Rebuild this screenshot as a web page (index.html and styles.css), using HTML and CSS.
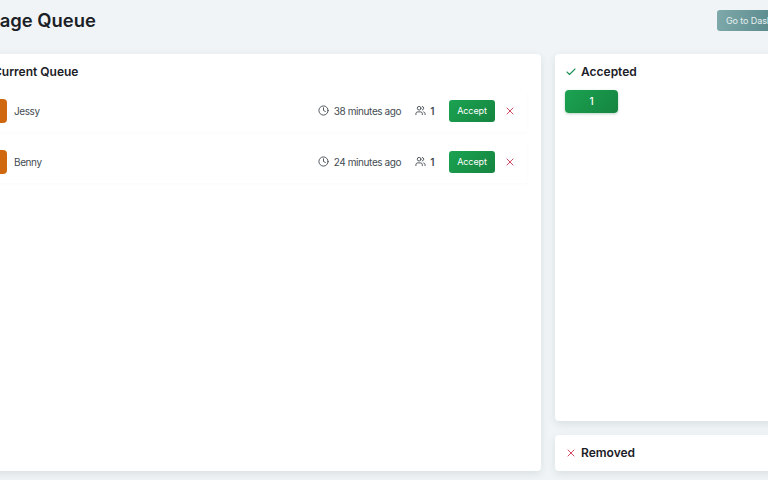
FILE: index.html
```html
<!DOCTYPE html>
<html lang="en">
<head>
    <meta charset="UTF-8">
    <meta name="viewport" content="width=device-width, initial-scale=1.0">
    <title>Manage Queue</title>
    <link rel="stylesheet" href="styles.css">
</head>
<body>
    <div class="page">
        <header class="top-bar">
            <h1>Manage Queue</h1>
            <a class="dash-btn">Go to Dashboard</a>
        </header>

        <div class="columns">
            <section class="card queue-card">
                <h2>Current Queue</h2>
                <div class="queue-row">
                    <div class="avatar"></div>
                    <div class="name">Jessy</div>
                    <div class="meta">
                        <svg class="icon" viewBox="0 0 24 24"><circle cx="12" cy="12" r="10"/><path d="M12 6v6l4 2"/></svg>
                        <span>38 minutes ago</span>
                    </div>
                    <div class="party">
                        <svg class="icon" viewBox="0 0 24 24"><path d="M16 21v-2a4 4 0 0 0-4-4H6a4 4 0 0 0-4 4v2"/><circle cx="9" cy="7" r="4"/><path d="M22 21v-2a4 4 0 0 0-3-3.87"/><path d="M16 3.13a4 4 0 0 1 0 7.75"/></svg>
                        <span>1</span>
                    </div>
                    <button class="accept-btn">Accept</button>
                    <svg class="icon remove" viewBox="0 0 24 24"><path d="M18 6 6 18"/><path d="m6 6 12 12"/></svg>
                </div>
                <div class="queue-row">
                    <div class="avatar"></div>
                    <div class="name">Benny</div>
                    <div class="meta">
                        <svg class="icon" viewBox="0 0 24 24"><circle cx="12" cy="12" r="10"/><path d="M12 6v6l4 2"/></svg>
                        <span>24 minutes ago</span>
                    </div>
                    <div class="party">
                        <svg class="icon" viewBox="0 0 24 24"><path d="M16 21v-2a4 4 0 0 0-4-4H6a4 4 0 0 0-4 4v2"/><circle cx="9" cy="7" r="4"/><path d="M22 21v-2a4 4 0 0 0-3-3.87"/><path d="M16 3.13a4 4 0 0 1 0 7.75"/></svg>
                        <span>1</span>
                    </div>
                    <button class="accept-btn">Accept</button>
                    <svg class="icon remove" viewBox="0 0 24 24"><path d="M18 6 6 18"/><path d="m6 6 12 12"/></svg>
                </div>
            </section>

            <div class="side">
                <section class="card accepted-card">
                    <h2 class="side-title">
                        <svg class="icon check" viewBox="0 0 24 24"><path d="M20 6 9 17l-5-5"/></svg>
                        Accepted
                    </h2>
                    <div class="ticket">1</div>
                </section>
                <section class="card removed-card">
                    <h2 class="side-title">
                        <svg class="icon remove" viewBox="0 0 24 24"><path d="M18 6 6 18"/><path d="m6 6 12 12"/></svg>
                        Removed
                    </h2>
                </section>
            </div>
        </div>
    </div>
</body>
</html>
```

FILE: styles.css
```css
html, body {
    margin: 0;
    height: 100%;
    overflow: hidden;
}
body {
    font-family: Inter, "Noto Sans", sans-serif;
    color: #1a2026;
    background: #f0f4f6;
}
.page {
    width: 879px;
    margin-left: -39px;
    padding-top: 9px;
}
.top-bar {
    display: flex;
    justify-content: space-between;
    align-items: center;
    height: 22px;
    margin-bottom: 23px;
}
h1 {
    margin: 0;
    font-size: 18.4px;
    font-weight: 600;
}
.dash-btn {
    width: 123px;
    height: 21px;
    padding-left: 9px;
    line-height: 21px;
    box-sizing: border-box;
    font-size: 9px;
    letter-spacing: -0.1px;
    color: #e6f0f0;
    background: linear-gradient(100deg, #7fa9aa, #2f666b);
    border-radius: 3px;
}
.columns {
    display: flex;
    gap: 14px;
    padding-left: 9px;
}
.card {
    background: #fff;
    border-radius: 4px;
    box-shadow: 0 3px 9px rgba(30, 50, 60, 0.1);
    box-sizing: border-box;
}
.queue-card {
    width: 571px;
    height: 417px;
    padding: 10px 14px;
}
h2 {
    margin: 0;
    font-size: 12px;
    font-weight: 600;
    line-height: 15px;
}
.queue-card h2 {
    margin-bottom: 10px;
    padding-left: 9px;
}
.queue-row {
    display: flex;
    align-items: center;
    height: 43px;
    padding-right: 11px;
    box-shadow: 0 1px 3px rgba(30, 50, 60, 0.025);
    margin-bottom: 8px;
    font-size: 10px;
    letter-spacing: -0.4px;
    color: #444c52;
}
.avatar {
    width: 23px;
    height: 24px;
    border-radius: 4px;
    background: #d0680f;
    margin-right: 7px;
}
.name {
    flex: 1;
}
.icon {
    width: 11px;
    height: 11px;
    fill: none;
    stroke: currentColor;
    stroke-width: 2;
    stroke-linecap: round;
    stroke-linejoin: round;
    flex: none;
}
.meta {
    display: flex;
    align-items: center;
    gap: 5px;
}
.party {
    display: flex;
    align-items: center;
    gap: 4px;
    margin-left: 14px;
    margin-right: 15px;
    font-weight: 600;
}
.accept-btn {
    width: 46px;
    height: 22px;
    padding: 0;
    border: none;
    border-radius: 3px;
    background: linear-gradient(135deg, #1ba352, #15843f);
    color: #fff;
    font-family: inherit;
    font-size: 9px;
    font-weight: 400;
    letter-spacing: -0.1px;
    margin-right: 9px;
}
.remove {
    width: 12px;
    height: 12px;
    color: #d0485f;
}
.check {
    width: 12px;
    height: 12px;
    color: #1f9058;
    stroke-width: 2.2;
}
.side {
    flex: 1;
    display: flex;
    flex-direction: column;
    gap: 14px;
}
.accepted-card {
    height: 367px;
    padding: 10px;
}
.removed-card {
    height: 36px;
    padding: 10px;
}
.side-title {
    display: flex;
    align-items: center;
    gap: 4px;
}
.ticket {
    width: 53px;
    height: 23px;
    line-height: 23px;
    margin-top: 11px;
    text-align: center;
    font-size: 10px;
    font-weight: 500;
    color: #fff;
    border-radius: 4px;
    background: linear-gradient(135deg, #1ba352, #15843f);
    box-shadow: 0 1px 3px rgba(20, 100, 60, 0.3);
}
```
